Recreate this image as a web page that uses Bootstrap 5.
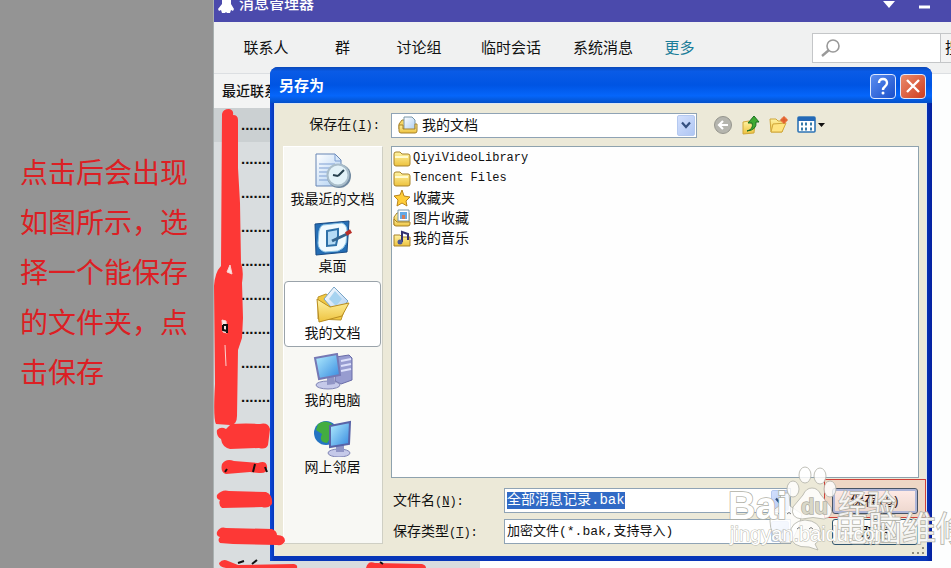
<!DOCTYPE html>
<html lang="zh-CN">
<head>
<meta charset="utf-8">
<meta name="viewport" content="width=device-width, initial-scale=1">
<title>消息管理器</title>
<link rel="stylesheet" href="https://cdn.jsdelivr.net/npm/bootstrap@5.3.0/dist/css/bootstrap.min.css">
<style>
  body { font: 14px/20px "Liberation Sans", "Noto Sans CJK SC", sans-serif; color: #111; background: #fdfefe; }
  button { color: inherit; }
  .side-note { width: 214px; background: #949494; border-right: 1px solid #a9b0b0; padding: 149px 16px 0 20px; }
  .side-note p { font: 400 28px/50px "Liberation Serif", "Noto Sans CJK SC", serif; color: #dc1f24; width: 172px; }
  .app-title { height: 22px; background: #4b4aac; color: #fff; }
  .app-title h1 { font-size: 15px; line-height: 8px; }
  .app-title svg { display: block; }
  .tab-strip { height: 52px; background: #f0f1f1; border-bottom: 1px solid #dcdfe2; padding-left: 6px; }
  .tab-link { width: 92px; font-size: 15px; text-align: center; color: #111; text-decoration: none; }
  .tab-narrow { width: 61px; }
  .tab-more { color: #1b7d99; }
  .search-box { width: 129px; height: 30px; border: 1px solid #c4c6c8; background: #fff; }
  .search-box input { min-width: 0; width: 0; border: 0; outline: 0; background: none; }
  .search-btn { width: 10px; height: 30px; border: 1px solid #c4c6c8; border-width: 1px 0; background: #f3f3f3; font-size: 15px; text-align: left; white-space: nowrap; }
  .recent { width: 266px; background: #d9dddf; }
  .recent h2 { font-size: 14px; line-height: 34px; background: #f3f4f4; }
  .recent li { height: 34px; padding: 5px 0 0 27px; font-size: 15px; font-weight: 700; line-height: 24px; }
  .recent li:first-child { background: #cbd0d2; }
  .save-dialog { position: absolute; left: 56px; top: 67px; right: 19px; bottom: 7px; background: linear-gradient(90deg, #0a49d8, #0736b8 4px, #0736b8 99%, #0420a0); border-radius: 8px 8px 0 0; padding: 0 5px 5px 4px; }
  .dlg-title { height: 36px; color: #fff; background: linear-gradient(#0a48b8, #0a5be6 12%, #0054e3 50%, #0566fb 80%, #0450c8); border-radius: 8px 8px 0 0; margin: 0 -5px 0 -4px; padding: 2px 6px 0 9px; }
  .dlg-title h2 { font-size: 15px; font-weight: 700; line-height: 20px; }
  .cap-btn { width: 26px; height: 25px; border: 1px solid #dfe9ff; border-radius: 4px; background: linear-gradient(135deg, #5b8df0, #1a4fcb); }
  .cap-close { background: linear-gradient(135deg, #ea8b6c, #cf3d20); }
  .dlg-body { background: #ece9d8; padding: 8px 7px 12px 8px; border: 1px solid #dce6f2; border-width: 1px 1px 0; }
  .look-row { height: 26px; }
  .look-label { width: 108px; padding-right: 11px; text-align: right; }
  .field { height: 25px; border: 1px solid #8fa3b5; background: #fff; padding: 0 1px 0 2px; }
  .field select, .field input { appearance: none; border: 0; outline: 0; background: none; padding: 0; min-width: 0; color: #111; }
  .look-field { width: 306px; }
  .drop-btn { width: 18px; height: 21px; border: 1px solid #b5c9f0; border-radius: 2px; background: linear-gradient(135deg, #d3e0fd, #afc6f3); }
  .tool { border: 0; background: none; padding: 0; height: 20px; line-height: 1; }
  .places { width: 100px; background: #f8f8f4; border: 1px solid #fff; border-right-color: #cfcfc4; border-bottom-color: #cfcfc4; }
  .place { width: 97px; height: 66px; margin-bottom: 1px; padding: 4px 0 0; border: 1px solid transparent; border-radius: 4px; background: none; line-height: 20px; white-space: nowrap; }
  .place.chosen { background: #fff; border-color: #9aa3aa; }
  .file-list { border: 1px solid #8ea2ae; background: #fefefe; padding: 1px 0 0 1px; }
  .file-list li { height: 20px; gap: 2px; }
  .mono { font-family: "Liberation Mono", "Noto Sans CJK SC", monospace; }
  .mono-small { font-size: 12px; }
  .name-row { height: 25px; }
  .name-label { width: 113px; padding-left: 2px; }
  .name-field { margin-right: 41px; }
  .field .file-name { width: 118px; height: 17px; line-height: 17px; background: #316ac5; color: #fff; flex: none; }
  .field .file-type { font-size: 13px; }
  .dlg-btn { width: 86px; height: 26px; border: 1px solid #31566e; border-radius: 3px; background: linear-gradient(#fff, #eceae2); margin-right: 1px; padding: 0; }
  .dlg-save { box-shadow: inset 0 0 0 2px #a4c3ee; }
  .save-mark { position: absolute; right: 6px; bottom: 43px; width: 102px; height: 39px; border: 1px solid #cf4038; background: #ff38201a; pointer-events: none; }
  .scribble { position: absolute; left: -1px; top: 0; pointer-events: none; }
  .watermark { position: absolute; right: 0; bottom: 0; pointer-events: none; }
  .watermark text { font-family: "Liberation Sans", "Noto Sans CJK SC", sans-serif; paint-order: stroke; }
</style>
<script src="https://cdn.jsdelivr.net/npm/bootstrap@5.3.0/dist/js/bootstrap.bundle.min.js"></script>
</head>
<body>
<svg class="position-absolute" width="0" height="0" aria-hidden="true">
  <defs>
    <linearGradient id="gold" x2="0" y2="1"><stop stop-color="#fff3a4"/><stop offset="1" stop-color="#edc23e"/></linearGradient>
    <linearGradient id="screen" x2="1" y2="1"><stop stop-color="#b5efff"/><stop offset="1" stop-color="#3388df"/></linearGradient>
    <linearGradient id="paper" x2="1" y2="1"><stop stop-color="#fff"/><stop offset="1" stop-color="#abcdf1"/></linearGradient>
    <symbol id="folder" viewBox="0 0 18 17"><path d="M1 4q0-2 2-2h4l2 2h6q2 0 2 2v8q0 2-2 2H3q-2 0-2-2z" fill="url(#gold)" stroke="#a8832a"/><path d="M2 7h13" stroke="#fffbd0" stroke-width="2"/></symbol>
    <symbol id="chev" viewBox="0 0 10 8"><path d="M1 1.5 5 6l4-4.500" fill="none" stroke="#35507f" stroke-width="2.200"/></symbol>
    <symbol id="docs" viewBox="0 0 20 18"><path d="M1 8l3-4h4v9H1z" fill="#f7d766" stroke="#a8832a"/><path d="M6 1h8l3 3v10H6z" fill="url(#paper)" stroke="#7896a8"/><path d="M1 9v6q0 2 2 2h14q2 0 2-2V8h-2v5H5V9z" fill="url(#gold)" stroke="#a8832a"/></symbol>
    <symbol id="pics" viewBox="0 0 18 18"><path d="M1 8l3-4h12v12H1z" fill="url(#gold)" stroke="#a8832a"/><path d="M5 1h11v11H5z" fill="#fff" stroke="#7896a8"/><path d="M7 3h7v7H7z" fill="#62a8e4"/><path d="M9 6h3v4H9z" fill="#d07b5a"/><path d="M1 10v5q0 2 2 2h12q2 0 2-2v-2H4z" fill="url(#gold)" stroke="#a8832a"/></symbol>
  </defs>
</svg>

<div class="d-flex vh-100 overflow-hidden">
  <aside class="side-note flex-shrink-0">
    <p class="m-0">点击后会出现如图所示，选择一个能保存的文件夹，点击保存</p>
  </aside>

  <main class="flex-grow-1 position-relative d-flex flex-column">
    <header class="app-title d-flex flex-shrink-0 ps-1">
      <svg width="17" height="14" viewBox="0 0 17 14"><path d="M4 0h9v4l3 5-1 2-2-1-1 3h-3l-1-1-1 1H4l-1-3-2 1-1-2 4-5z" fill="#fff"/></svg>
      <h1 class="m-0 ms-1">消息管理器</h1>
      <svg class="ms-auto" width="68" height="12" viewBox="0 0 68 12"><path d="M0 1h12L6 8z" fill="#fff"/><path d="M36 7h11" stroke="#fff" stroke-width="3"/></svg>
    </header>

    <nav class="tab-strip d-flex align-items-center flex-shrink-0">
      <a class="tab-link" href="#">联系人</a>
      <a class="tab-link tab-narrow" href="#">群</a>
      <a class="tab-link" href="#">讨论组</a>
      <a class="tab-link" href="#">临时会话</a>
      <a class="tab-link" href="#">系统消息</a>
      <a class="tab-link tab-narrow tab-more" href="#">更多</a>
      <label class="search-box d-flex align-items-center ms-auto ps-2">
        <svg class="flex-shrink-0" width="20" height="20" viewBox="0 0 20 20"><circle cx="12" cy="8" r="6" fill="none" stroke="#999" stroke-width="1.600"/><path d="m8 12-7 6" stroke="#999" stroke-width="2.400"/></svg>
        <input class="flex-grow-1" type="search" aria-label="搜索">
      </label>
      <button class="search-btn overflow-hidden p-0 ps-1" type="button">搜索</button>
    </nav>

    <section class="recent flex-grow-1">
      <h2 class="m-0 ps-2">最近联系人</h2>
      <ul class="list-unstyled m-0">
        <li>.......</li><li>.......</li><li>.......</li><li>.......</li><li>.......</li><li>.......</li><li>.......</li><li>.......</li><li>.......</li>
      </ul>
    </section>

    <section class="save-dialog d-flex flex-column" role="dialog" aria-labelledby="dlgTitle">
      <div class="dlg-title d-flex align-items-center flex-shrink-0">
        <h2 class="m-0 me-auto" id="dlgTitle">另存为</h2>
        <button class="cap-btn p-0 d-flex align-items-center justify-content-center" type="button" aria-label="帮助"><svg width="14" height="18" viewBox="0 0 14 18"><path d="M3 6q0-4 4-4t4 4q0 2-2 3.500T7 13" fill="none" stroke="#fff" stroke-width="2.400"/><circle cx="7" cy="16" r="1.500" fill="#fff"/></svg></button>
        <button class="cap-btn cap-close p-0 ms-1 d-flex align-items-center justify-content-center" type="button" aria-label="关闭"><svg width="16" height="16" viewBox="0 0 16 16"><path d="m2 2 12 12M14 2 2 14" stroke="#fff" stroke-width="2.400"/></svg></button>
      </div>

      <form class="dlg-body flex-grow-1 d-flex flex-column gap-2">
        <div class="look-row d-flex align-items-center flex-shrink-0">
          <label class="look-label" for="lookIn">保存在<span class="mono mono-small">(<u>I</u>):</span></label>
          <div class="field look-field d-flex align-items-center">
            <svg class="mx-1" width="20" height="18"><use href="#docs"/></svg>
            <select class="flex-grow-1" id="lookIn"><option>我的文档</option></select>
            <span class="drop-btn d-flex align-items-center justify-content-center"><svg width="10" height="8"><use href="#chev"/></svg></span>
          </div>
          <div class="d-flex align-items-center gap-2 ms-3">
            <button class="tool" type="button" aria-label="后退"><svg width="20" height="20" viewBox="0 0 20 20"><circle cx="10" cy="10" r="8.500" fill="#b5b5ae" stroke="#96968e"/><path d="M15 10H6m4-4-4 4 4 4" fill="none" stroke="#fff" stroke-width="2.200"/></svg></button>
            <button class="tool" type="button" aria-label="上一级"><svg width="20" height="20" viewBox="0 0 20 20"><path d="M2 7l6-1 1 2h5l-1 10-11 1z" fill="url(#gold)" stroke="#d0a73a"/><path d="M6 16q7-2 5-8H7l6-7 5 6h-3q1 8-9 9z" fill="#3faa32" stroke="#187020"/></svg></button>
            <button class="tool" type="button" aria-label="新建文件夹"><svg width="20" height="20" viewBox="0 0 20 20"><path d="M1 4h6l2 2h7l-3 11H2z" fill="url(#gold)" stroke="#d0a73a"/><path d="m4 9 13-1-4 9H2z" fill="#ffe480" stroke="#d0a73a"/><circle cx="15" cy="5" r="3" fill="#ee713b"/><path d="m15 1v8m-4-4h8" stroke="#d65a2a"/></svg></button>
            <button class="tool" type="button" aria-label="查看"><svg width="28" height="20" viewBox="0 0 28 20"><rect x="1" y="2" width="17" height="15" rx="1" fill="#fff" stroke="#2e74b5" stroke-width="1.600"/><path d="M1 4h17" stroke="#2469b7" stroke-width="4"/><path d="M4 9h2m2 0h2m3 0h2M4 14h2m2 0h2m3 0h2" stroke="#367aa8" stroke-width="3"/><path d="M21 8h7l-3.500 4z" fill="#111"/></svg></button>
          </div>
        </div>

        <div class="d-flex flex-grow-1 gap-2">
          <div class="places flex-shrink-0">
            <button class="place d-flex flex-column align-items-center" type="button">
              <svg width="40" height="37" viewBox="0 0 40 37"><path d="M3 2h19l6 6v26H3z" fill="url(#paper)" stroke="#6785b4"/><path d="M22 2v7h6M6 12h16M6 16h13M6 20h11M6 24h10M6 28h11" fill="none" stroke="#7e9fd2"/><circle cx="26" cy="24" r="12" fill="#6f889f"/><circle cx="25" cy="23" r="10.500" fill="#e3f2f8" stroke="#a9bdca" stroke-width="2"/><path d="m25 24 6-6m-6 6-5-1" stroke="#27404e" stroke-width="2"/></svg>
              我最近的文档</button>
            <button class="place d-flex flex-column align-items-center" type="button">
              <svg width="40" height="37" viewBox="0 0 40 37"><path d="m2 5 34-3-2 31-31 3z" fill="#246eb5" stroke="#174a84"/><path d="m10 6 19-2q5 2 5 8l-1 12q-2 6-8 8l-13 1q-7-2-7-9L6 12q1-5 4-6z" fill="#f0faff" stroke="#8ac3e5"/><path d="m14 12 11-2v7l-2 9-9 1z" fill="#b5dbf5" stroke="#2d70a8" stroke-width="2"/><path d="m19 22 15-7" stroke="#35658e" stroke-width="3"/><path d="m33 15 5-3" stroke="#b92f29" stroke-width="4"/></svg>
              桌面</button>
            <button class="place chosen d-flex flex-column align-items-center" type="button">
              <svg width="40" height="37" viewBox="0 0 40 37"><path d="m5 11 8-3 3 2 18 6-6 18-23-1z" fill="#f1c842" stroke="#bd962c"/><path d="m21 1 14 14-11 13-13-15z" fill="url(#paper)" stroke="#77a5c7"/><path d="m16 13 6-8 7 8-6 7z" fill="#a7d3f0"/><path d="m4 13 13 8 19-4-7 13-23 6z" fill="url(#gold)" stroke="#b98d21"/></svg>
              我的文档</button>
            <button class="place d-flex flex-column align-items-center" type="button">
              <svg width="40" height="37" viewBox="0 0 40 37"><path d="m23 4 13-2 3 3v22l-11 4-6-3z" fill="#979cd0" stroke="#696ca8"/><path d="m28 8 10-2m-10 7 10-2m-10 7 10-2" stroke="#dce0fa" stroke-width="2"/><ellipse cx="15" cy="32" rx="12" ry="4" fill="#c5c9e9" stroke="#8085b5"/><path d="m14 24 7-1 1 8-8 1z" fill="#9095c5"/><path d="m2 5 22-4 3 21-21 4z" fill="url(#screen)" stroke="#7578b4" stroke-width="2"/></svg>
              我的电脑</button>
            <button class="place d-flex flex-column align-items-center" type="button">
              <svg width="40" height="37" viewBox="0 0 40 37"><circle cx="13" cy="13" r="12" fill="#2474c2"/><path d="M5 4q7-5 14 0l-3 5 4 5-6 9q-9-1-5-9l-6-4z" fill="#43ad40"/><ellipse cx="26" cy="33" rx="11" ry="4" fill="#c5c9e9" stroke="#8085b5"/><path d="m23 24 8 1v7h-8z" fill="#9095c5"/><path d="m17 6 20-4-1 22-19 3z" fill="url(#screen)" stroke="#5963a6" stroke-width="2"/></svg>
              网上邻居</button>
          </div>

          <div class="flex-grow-1 d-flex flex-column">
            <ul class="file-list list-unstyled flex-grow-1 mb-0">
              <li class="d-flex align-items-center"><svg width="18" height="17"><use href="#folder"/></svg><span class="mono mono-small">QiyiVideoLibrary</span></li>
              <li class="d-flex align-items-center"><svg width="18" height="17"><use href="#folder"/></svg><span class="mono mono-small">Tencent Files</span></li>
              <li class="d-flex align-items-center"><svg width="18" height="18" viewBox="0 0 18 18"><path d="m9 1 2 6 6 1-4 4 1 5-5-3-5 3 1-6-4-4 6-1z" fill="#ffcd38" stroke="#b9851b"/></svg>收藏夹</li>
              <li class="d-flex align-items-center"><svg width="18" height="18"><use href="#pics"/></svg>图片收藏</li>
              <li class="d-flex align-items-center"><svg width="18" height="18" viewBox="0 0 18 18"><path d="M1 6h6l2 2h8v9H1z" fill="url(#gold)" stroke="#a8832a"/><path d="M9 13V3l6 2v6" fill="none" stroke="#33306e" stroke-width="2"/><circle cx="7" cy="13" r="2.500" fill="#4b5795"/></svg>我的音乐</li>
            </ul>
            <div class="name-row d-flex align-items-center mt-2 pt-1 mb-2">
              <label class="name-label" for="fileName">文件名<span class="mono mono-small">(<u>N</u>):</span></label>
              <div class="field name-field flex-grow-1 d-flex align-items-center">
                <input class="file-name mono" id="fileName" type="text" value="全部消息记录.bak">
                <button class="drop-btn ms-auto p-0 d-flex align-items-center justify-content-center" type="button" aria-label="历史名称"><svg width="10" height="8"><use href="#chev"/></svg></button>
              </div>
              <button class="dlg-btn dlg-save" type="submit">保存<span class="mono mono-small">(<u>S</u>)</span></button>
            </div>
            <div class="name-row d-flex align-items-center">
              <label class="name-label" for="fileType">保存类型<span class="mono mono-small">(<u>T</u>):</span></label>
              <div class="field name-field flex-grow-1 d-flex align-items-center">
                <select class="file-type mono flex-grow-1" id="fileType"><option>加密文件(*.bak,支持导入)</option></select>
                <span class="drop-btn d-flex align-items-center justify-content-center"><svg width="10" height="8"><use href="#chev"/></svg></span>
              </div>
              <button class="dlg-btn" type="button">取消</button>
            </div>
          </div>
        </div>
      </form>
      <div class="save-mark"></div>
    </section>

    <svg class="scribble" width="220" height="568" viewBox="213 0 220 568" aria-hidden="true">
      <g fill="#fd3836">
        <path d="M222 114q1-5 7-5 5 1 4 6 5 0 5 5v48l2 35 1 60q3 8 1 20l1 35-1 20-4 12-1 66q0 9-7 9l-14-1q-3-5-1-40l-1-98q1-14 7-20z"/>
        <path d="M217 430q4-4 9-1l5-5q15-1 29 0 8-2 10 5l-2 16q-2 5-9 3l-29 1q-8-2-9-10-5-3-4-9z"/>
        <path d="M222 464q4-6 12-3l24 2q8-3 9 3 1 8-8 7l-9-1-24 2q-6-2-4-10z"/>
        <path d="M217 495q5-6 12-4l37 1q7 3 6 12-4 5-10 3l-40 1q-4-3-2-8-4-1-3-5z"/>
        <path d="M217 532q3-6 9-4l46 1q5 2 5 6 8 0 8 6-2 5-8 4l-44-1-13-1q-3-3 0-6-4-1-3-5z"/>
        <path d="M219 563q4-5 9-2l10 4 56-1q4 1 3 4h-71q-7-1-7-5zM366 568q2-8 9-5l47 1q4 1 4 4z"/>
      </g>
      <path d="m230 265-3 7 5 2zm-8 55 4 1 1 12-4-1zm3 25 1 21" fill="#f8e5e5" stroke="#fbd3d0"/>
      <path d="M223 325h4v8m-4-8v5l4 1M225 472l2-3m26 3 2-8m10 3 2 5M238 563l6-2m8 3 5-4M380 562l3 2" fill="none" stroke="#111" stroke-width="2"/>
    </svg>

    <svg class="watermark" width="231" height="118" viewBox="720 450 231 118" role="img" aria-label="Baidu 经验">
      <g fill="#fff" fill-opacity=".82" stroke="#b0b0a6" stroke-width=".8">
        <path d="M770 521q0-10 9-15l2-13h8l1 13 12 8-3 12-8 17h-10q-11-8-11-22z"/>
        <ellipse cx="805" cy="475" rx="6" ry="8"/><ellipse cx="820" cy="476" rx="6" ry="8"/><ellipse cx="793" cy="489" rx="6" ry="8"/><ellipse cx="830" cy="489" rx="6" ry="8"/>
        <path d="M812 488q6 0 9 7l10 12q3 10-7 12-11-3-22 0-12-1-9-12l10-12q3-7 9-7z"/>
        <path d="M790 534q1-13 15-14 15 1 16 13 0 7-6 11l3 6-9-3q-18 1-19-13z"/>
      </g>
      <path d="M797 529q2-3 4 0m8 0q2-3 4 0M778 514q2-3 4 0m5 0q2-3 4 0" fill="none" stroke="#777"/>
      <g fill="#fff" stroke="#b0b0a6" stroke-width="1.500">
        <text x="728" y="519" font-size="38" font-weight="700">Bai</text>
        <text x="801" y="514" font-size="22" font-weight="700" fill="#d9d7c7">du</text>
        <text x="838" y="516" font-size="29" fill-opacity=".85">经验</text>
        <text x="834" y="541" font-size="34" fill-opacity=".85">电脑维修</text>
      </g>
      <text x="730" y="541" font-size="20" fill="#fff" stroke="#b9b9ae">jingyan.baidu.com</text>
      <path d="M917 553h2m3 0h2m-2-5h2m-12 5h2" stroke="#8d8b7d" stroke-width="2"/>
    </svg>
  </main>
</div>
</body>
</html>
